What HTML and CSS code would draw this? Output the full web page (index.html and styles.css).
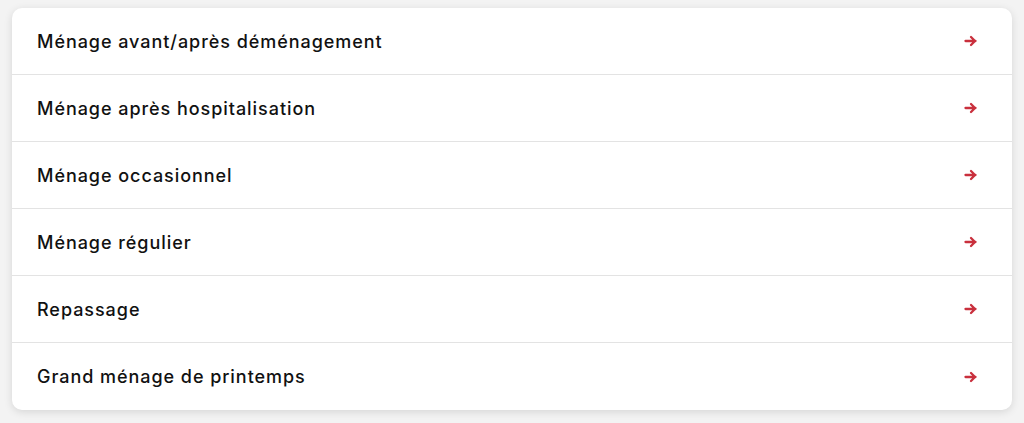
FILE: index.html
```html
<!DOCTYPE html>
<html lang="fr">
<head>
  <meta charset="UTF-8">
  <meta name="viewport" content="width=device-width, initial-scale=1.0">
  <title>Services</title>
  <link rel="stylesheet" href="styles.css">
</head>
<body>
  <div class="card">
    <a class="row" href="#"><span>Ménage avant/après déménagement</span><svg class="arrow" viewBox="0 0 14 12"><path d="M1.5 6h10M7 2l4 4-4 4"/></svg></a>
    <a class="row" href="#"><span>Ménage après hospitalisation</span><svg class="arrow" viewBox="0 0 14 12"><path d="M1.5 6h10M7 2l4 4-4 4"/></svg></a>
    <a class="row" href="#"><span>Ménage occasionnel</span><svg class="arrow" viewBox="0 0 14 12"><path d="M1.5 6h10M7 2l4 4-4 4"/></svg></a>
    <a class="row" href="#"><span>Ménage régulier</span><svg class="arrow" viewBox="0 0 14 12"><path d="M1.5 6h10M7 2l4 4-4 4"/></svg></a>
    <a class="row" href="#"><span>Repassage</span><svg class="arrow" viewBox="0 0 14 12"><path d="M1.5 6h10M7 2l4 4-4 4"/></svg></a>
    <a class="row" href="#"><span>Grand ménage de printemps</span><svg class="arrow" viewBox="0 0 14 12"><path d="M1.5 6h10M7 2l4 4-4 4"/></svg></a>
  </div>
</body>
</html>
```

FILE: styles.css
```css
* {
  margin: 0;
  padding: 0;
  box-sizing: border-box;
}
body {
  background: #f3f3f3;
  padding: 8px 12px 14px 12px;
  font-family: Inter, "Noto Sans", sans-serif;
}
.card {
  background: #fff;
  border-radius: 10px;
  box-shadow: 0 2px 8px rgba(0, 0, 0, 0.12);
  overflow: hidden;
}
.row {
  display: flex;
  align-items: center;
  justify-content: space-between;
  height: 67px;
  padding: 0 34px 0 25px;
  border-bottom: 1px solid #e3e3e3;
  color: #111;
  text-decoration: none;
  font-size: 18px;
  font-weight: 500;
  letter-spacing: 0.95px;
}
.row:last-child {
  border-bottom: none;
}
.arrow {
  width: 14px;
  height: 12px;
  fill: none;
  stroke: #c9303d;
  stroke-width: 2.3;
  stroke-linecap: round;
  stroke-linejoin: round;
}
```
